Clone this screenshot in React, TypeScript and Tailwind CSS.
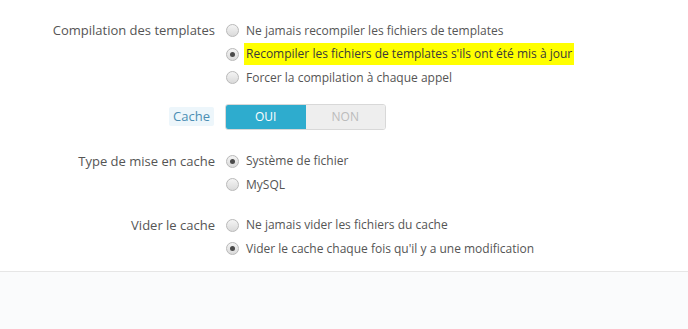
import type { ReactNode } from 'react'

function Radio({ checked }: { checked?: boolean }) {
  return (
    <span className="flex h-[13px] w-[13px] shrink-0 items-center justify-center rounded-full border border-[#b9b9b9] bg-gradient-to-b from-[#f4f4f4] to-[#dadada]">
      {checked && <span className="h-[5px] w-[5px] rounded-full bg-[#4a4a4a]" />}
    </span>
  )
}

function Option({ checked, children }: { checked?: boolean; children: ReactNode }) {
  return (
    <div className="flex h-[23.5px] items-center gap-[7px]">
      <Radio checked={checked} />
      <span className="whitespace-nowrap">{children}</span>
    </div>
  )
}

function Row({ label, children, className }: { label: ReactNode; children: ReactNode; className?: string }) {
  return (
    <div className={'flex ' + (className ?? '')}>
      <div className="w-[215px] shrink-0 text-right text-[13px]">{label}</div>
      <div className="pl-[11px]">{children}</div>
    </div>
  )
}

export default function App() {
  return (
    <div
      className="min-h-[329px] w-[688px] bg-[#fafbfc] text-[12px] text-[#555]"
      style={{ fontFamily: '"Open Sans", "Noto Sans", sans-serif' }}
    >
      <div className="border-b border-[#e6e6e6] bg-white pb-[10px] pt-[19px]">
        <Row label={<span className="leading-[23.5px]">Compilation des templates</span>}>
          <Option>Ne jamais recompiler les fichiers de templates</Option>
          <div className="flex h-[23.5px] items-center gap-[5px]">
            <Radio checked />
            <span className="whitespace-nowrap bg-[#ffff00] py-[2px] pl-[2px] pr-[2px] text-[#3a3a3a]">
              Recompiler les fichiers de templates s'ils ont été mis à jour
            </span>
          </div>
          <Option>Forcer la compilation à chaque appel</Option>
        </Row>

        <Row
          className="mt-[14px] items-center"
          label={
            <span className="mr-px inline-block rounded-[2px] bg-[#edf6fb] px-[4px] leading-[19px] text-[#4a8db3]">
              Cache
            </span>
          }
        >
          <div className="-ml-[1px] flex h-[26px] w-[161px] overflow-hidden rounded-[3px] border border-[#d8d8d8]">
            <div className="flex flex-1 items-center justify-center bg-[#2eacce] text-white">OUI</div>
            <div className="flex flex-1 items-center justify-center bg-[#eeeeee] text-[#bbbbbb]">NON</div>
          </div>
        </Row>

        <Row className="mt-[20px]" label={<span className="leading-[23.5px]">Type de mise en cache</span>}>
          <Option checked>Système de fichier</Option>
          <Option>MySQL</Option>
        </Row>

        <Row className="mt-[17px]" label={<span className="leading-[23.5px]">Vider le cache</span>}>
          <Option>Ne jamais vider les fichiers du cache</Option>
          <Option checked>Vider le cache chaque fois qu'il y a une modification</Option>
        </Row>
      </div>
    </div>
  )
}
